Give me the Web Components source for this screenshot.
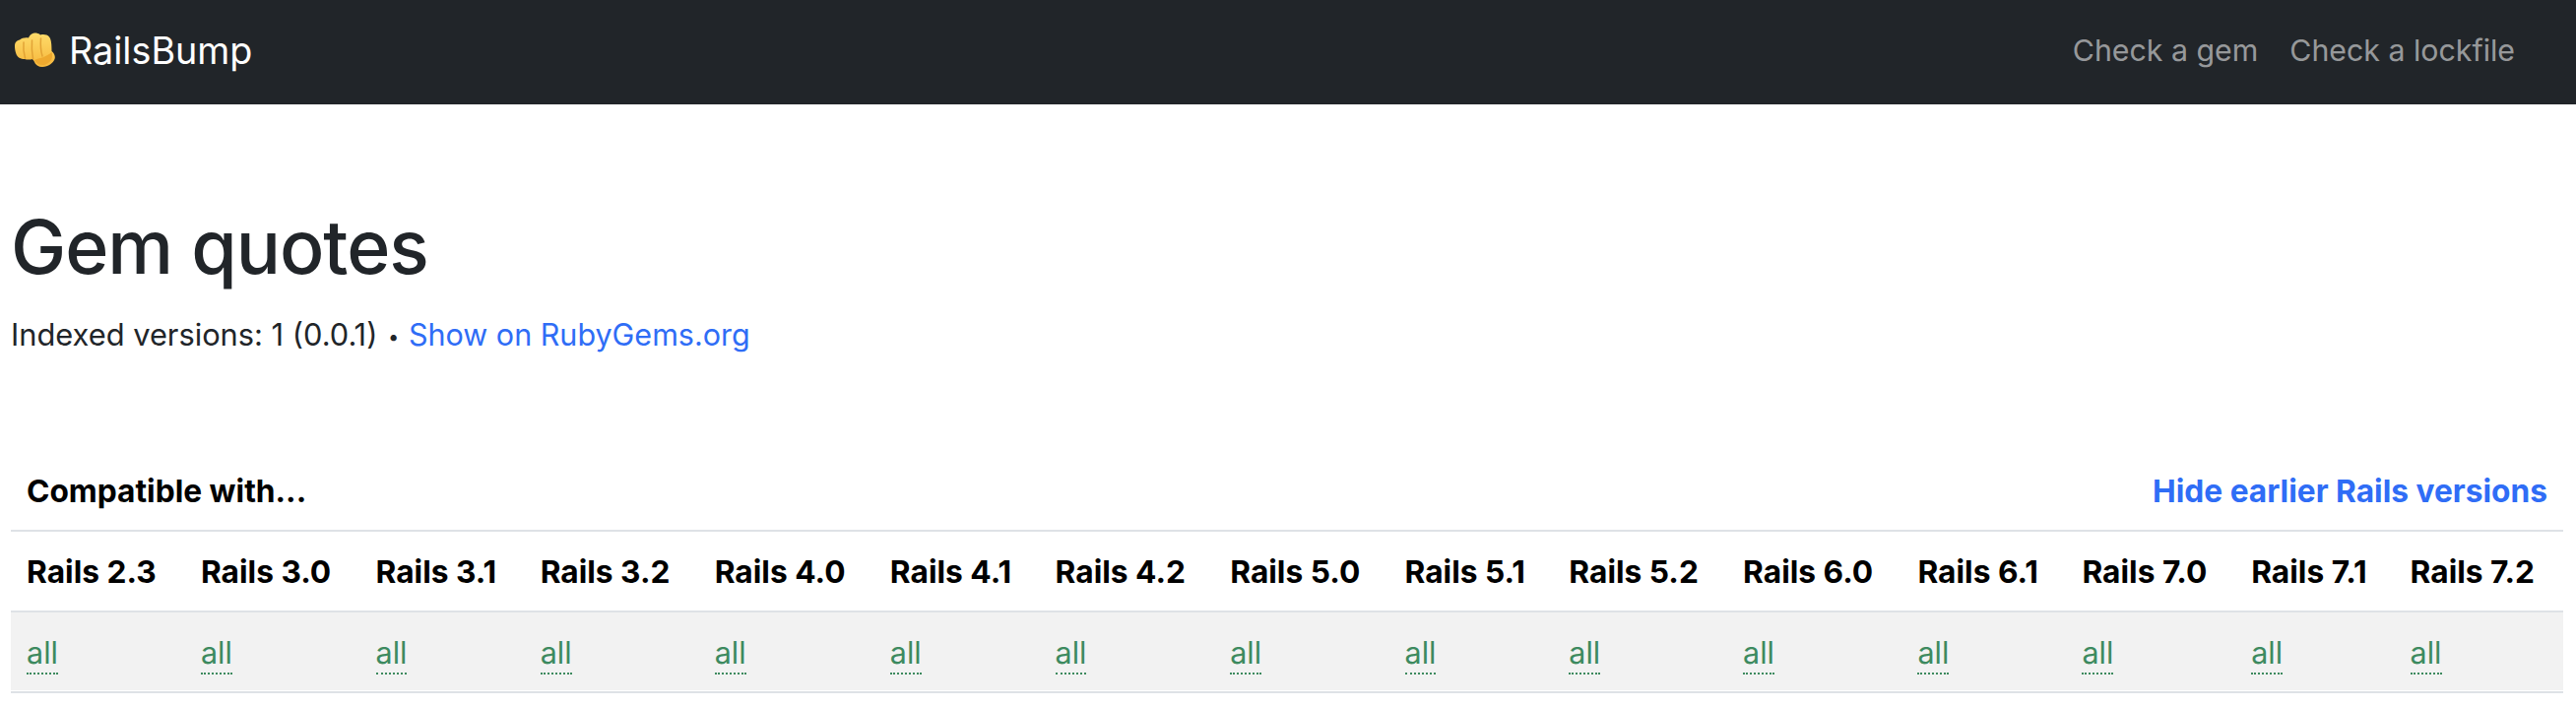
<!DOCTYPE html>
<html>
<head>
<meta charset="utf-8">
<title>RailsBump</title>
<style>
  html, body { margin: 0; padding: 0; background: #fff; }
  body { font-family: Inter, "Liberation Sans", sans-serif; color: #212529; }
</style>
</head>
<body>
<rb-navbar>
  <rb-nav-link>Check a gem</rb-nav-link>
  <rb-nav-link>Check a lockfile</rb-nav-link>
</rb-navbar>
<rb-page-head name="Gem quotes" indexed="Indexed versions: 1 (0.0.1)" link="Show on RubyGems.org"></rb-page-head>
<rb-compat-table></rb-compat-table>

<script>
class Navbar extends HTMLElement {
    constructor() {
        super()
        this.root = this.attachShadow({ mode: 'open' })
        this.root.innerHTML = `
        <style>
            :host { display: flex; align-items: center; justify-content: space-between; height: 106px; background: #212529; padding: 0 62px 0 15px; box-sizing: border-box; }
            .brand { display: flex; align-items: center; gap: 14px; color: #fff; font-size: 37.700px; padding-bottom: 5px; }
            svg { display: block; width: 41px; height: 35px; }
            nav { display: flex; gap: 32px; padding-bottom: 5px; }
        </style>
        <div class="brand">
            <svg viewBox="0 0 41 35">
                <defs>
                    <linearGradient id="skin" x1="0" y1="0" x2="0" y2="1">
                        <stop offset="0" stop-color="#fedb6a"/>
                        <stop offset="1" stop-color="#f6b73c"/>
                    </linearGradient>
                </defs>
                <path d="M0 14 C0 10 2 8 5 7.500 C7 5.500 11 5 14 5.500 C15 2 19 0 22 .5 C24 1 25 1.500 26 2.500 C29 1.500 33 2 35 4.500 C37 7 37.500 12 37.500 19 C40 21 41.500 24 40.500 27 C39 31 34 35 28 35 C24 35 21 33 19.500 29 L18 27 C15 28 12 27.500 10 27 C6 27 2.500 25 1.500 22 C.5 19 0 17 0 14 Z" fill="url(#skin)"/>
                <path d="M9 10 C8.500 15 9 21 10.500 26 M17.500 8 C17 14 17.500 21 18.500 27 M26.500 6 C26 12 26.500 19 28 24" stroke="#dc9a2e" stroke-width="1.500" stroke-linecap="round" fill="none" opacity=".8"/>
                <path d="M20 28 C25 26 32 25 37.500 20 C39.500 25 37 31 30 33 C25 33.500 21.500 31.500 20 28 Z" fill="#eea92f"/>
            </svg>
            <span>RailsBump</span>
        </div>
        <nav><slot></slot></nav>`
    }
}
customElements.define('rb-navbar', Navbar)

class NavLink extends HTMLElement {
    constructor() {
        super()
        this.attachShadow({ mode: 'open' }).innerHTML = `
        <style>
            :host { display: block; color: rgba(255,255,255,.55); font-size: 30.300px; }
        </style>
        <slot></slot>`
    }
}
customElements.define('rb-nav-link', NavLink)

class PageHead extends HTMLElement {
    connectedCallback() {
        this.attachShadow({ mode: 'open' }).innerHTML = `
        <style>
            :host { display: block; padding: 0 11px; }
            h1 { margin: 0; padding-top: 102px; font-size: 75.200px; line-height: 86px; font-weight: 500; letter-spacing: -1px; color: #212529; }
            p { margin: 0; padding-top: 23px; font-size: 30.800px; line-height: 45px; color: #212529; }
            a { color: #2f6df6; text-decoration: none; font-size: 30.500px; }
            .dot { font-size: 20px; vertical-align: 2px; margin: 0 1px 0 2px; }
        </style>
        <h1>${this.getAttribute('name')}</h1>
        <p>${this.getAttribute('indexed')} <span class="dot">•</span> <a>${this.getAttribute('link')}</a></p>`
    }
}
customElements.define('rb-page-head', PageHead)

class CompatTable extends HTMLElement {
    connectedCallback() {
        const versions = ['2.3','3.0','3.1','3.2','4.0','4.1','4.2','5.0','5.1','5.2','6.0','6.1','7.0','7.1','7.2']
        this.attachShadow({ mode: 'open' }).innerHTML = `
        <style>
            :host { display: block; padding: 93px 13px 0 11px; }
            table { width: 100%; border-collapse: collapse; color: #000; }
            th { text-align: left; font-weight: 700; padding: 24px 16px 22px; line-height: 34px; white-space: nowrap; border-bottom: 2px solid #dee2e6; font-size: 31.700px; }
            .head a { float: right; color: #2f6df6; }
            td { padding: 24px 16px 22px; line-height: 34px; background: #f2f2f2; border-bottom: 2px solid #dee2e6; box-shadow: inset 0 -1px 0 #fff; color: #3d8a5f; font-size: 30.500px; }
            td span { border-bottom: 2px dotted #3d8a5f; padding-bottom: 2px; }
        </style>
        <table>
            <thead>
                <tr class="head"><th colspan="15">Compatible with...<a>Hide earlier Rails versions</a></th></tr>
                <tr>${versions.map(v => `<th>Rails ${v}</th>`).join('')}</tr>
            </thead>
            <tbody>
                <tr>${versions.map(() => `<td><span>all</span></td>`).join('')}</tr>
            </tbody>
        </table>`
    }
}
customElements.define('rb-compat-table', CompatTable)
</script>
</body>
</html>
